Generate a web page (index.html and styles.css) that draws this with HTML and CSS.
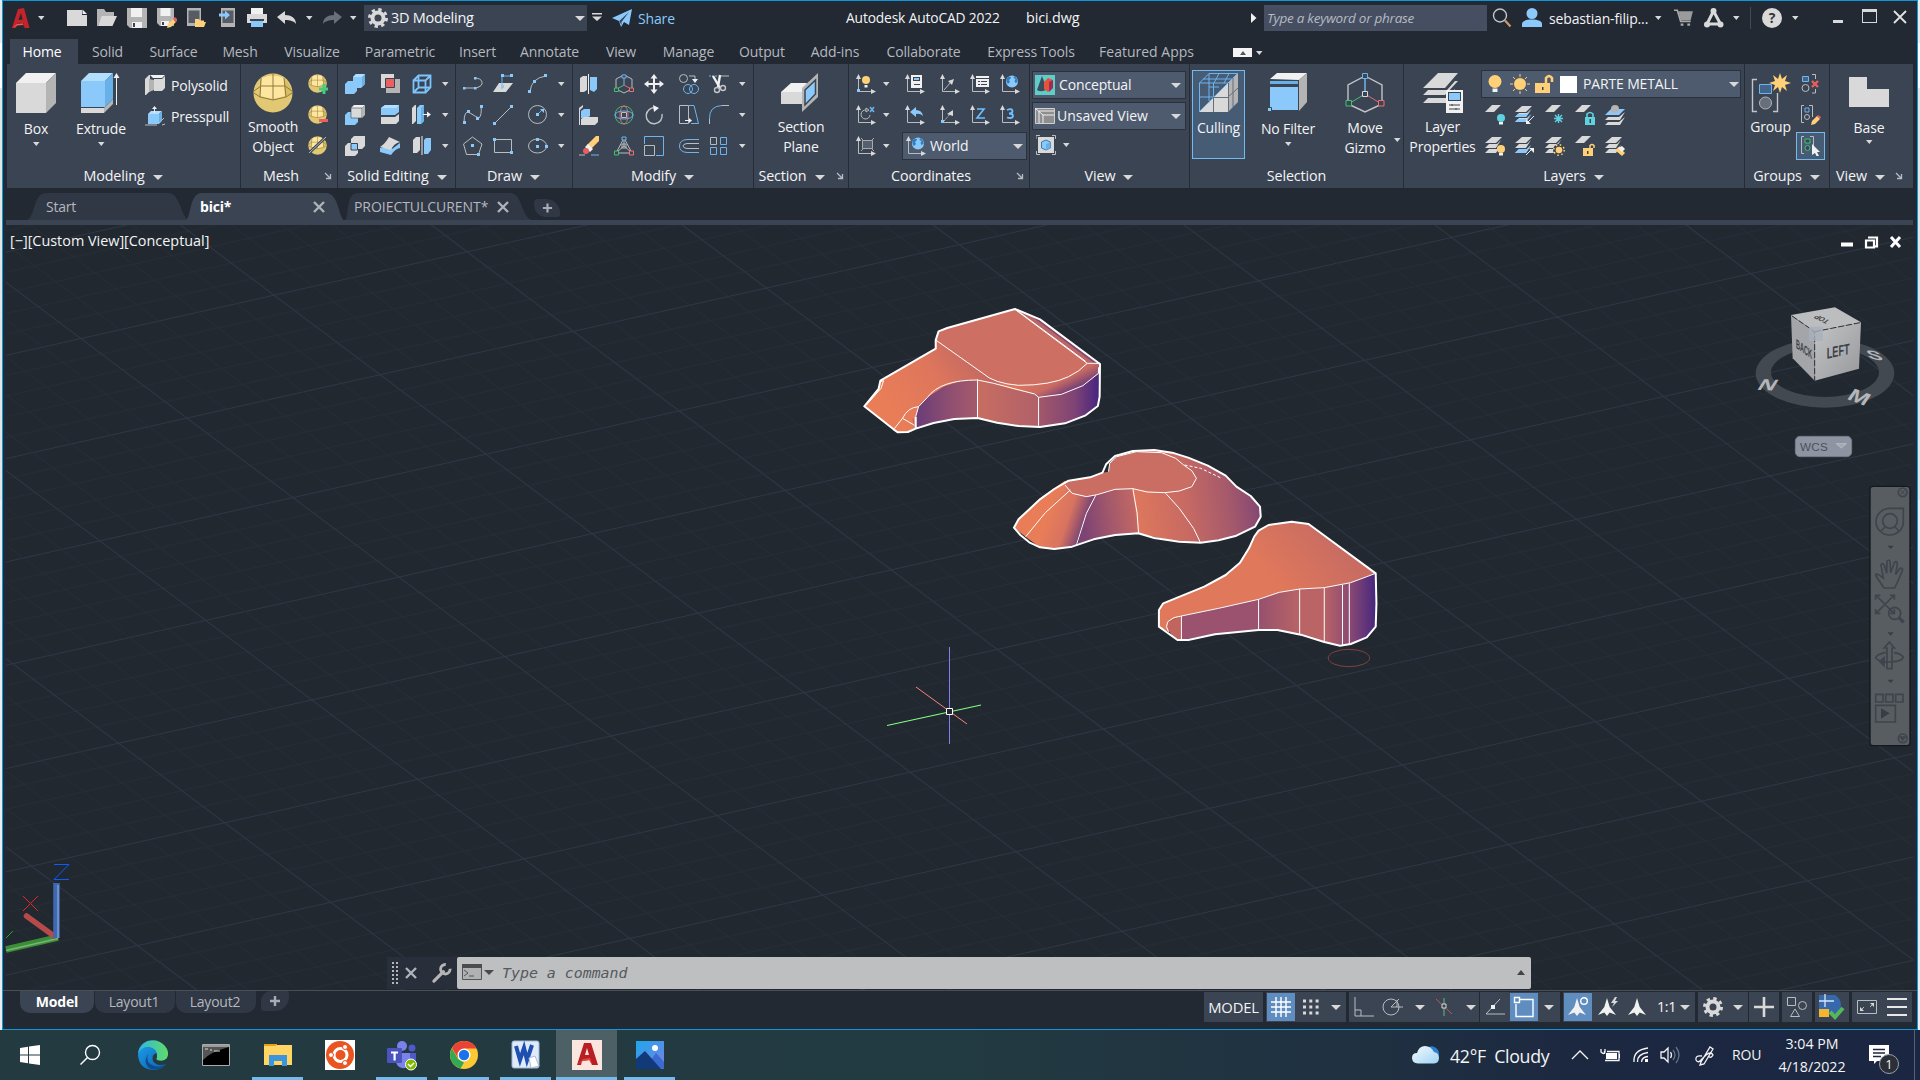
FILE: index.html
```html
<!DOCTYPE html>
<html lang="en">
<head>
<meta charset="utf-8">
<title>Autodesk AutoCAD 2022 - bici.dwg</title>
<link rel="stylesheet" href="styles.css">
</head>
<body>
<svg class="defs" width="0" height="0">
<defs>
<linearGradient id="edgeA" x1="0" y1="0" x2="1" y2="1"><stop offset="0" stop-color="#1a9be6"/><stop offset="1" stop-color="#0d5fb0"/></linearGradient>
<linearGradient id="edgeB" x1="0" y1="0" x2="1" y2="0"><stop offset="0" stop-color="#2fb5ea"/><stop offset="1" stop-color="#5fdc66"/></linearGradient>
<linearGradient id="photoG" x1="0" y1="0" x2="1" y2="1"><stop offset="0" stop-color="#1ea7ee"/><stop offset="1" stop-color="#7a7fe0"/></linearGradient>
<linearGradient id="cloudG" x1="0" y1="0" x2="1" y2="1"><stop offset="0" stop-color="#f4fbff"/><stop offset="1" stop-color="#9fd4f3"/></linearGradient>

<symbol id="dn" viewBox="0 0 12 12"><path class="fg" d="M3 4h6.500l-3.200 4z"/></symbol>
<symbol id="dnL" viewBox="0 0 12 12"><path class="fg" d="M1 4h10l-5 5z"/></symbol>
<symbol id="launch" viewBox="0 0 8 8"><path class="sg" stroke-width="1.300" d="M1 1l5 5M2 6.500h4.500V2"/></symbol>
<symbol id="logo" viewBox="0 0 18 21"><path d="M0 20L6 1l6-1 5.500 20h-5l-1-5-6 .5-1.500 4.500z" fill="#c4232a"/><path d="M6.500 12L9 5l1.700 6.500z" fill="#222933"/><path d="M0 20l5-4 6-.8 1.200 4.800-1-3-6 .5z" fill="#ee5a55"/></symbol>
<symbol id="new" viewBox="0 0 20 20"><path class="fg" d="M0 2h15v5h5v11H0z"/><path class="fw" d="M15.500 1.500L20 6h-4.500z"/></symbol>
<symbol id="open" viewBox="0 0 20 20"><path class="fd" d="M0 1h7l2 3h8v4H5L1 18H0z"/><path class="fg" d="M4.500 8H20l-4.500 10H1z"/></symbol>
<symbol id="save" viewBox="0 0 20 20"><path class="fd" d="M0 0h20v20H3l-3-3z"/><path class="fw" d="M4 0h11v9H4zM5 14h10v6H5z"/><path class="fk" d="M6 15h2v4H6z"/></symbol>
<symbol id="saveas" viewBox="0 0 20 20"><path class="fd" d="M0 0h17v18H3l-3-3z"/><path class="fw" d="M3.500 0h10v8h-10zM4 13h8v5H4z"/><path class="fk" d="M5 14h2v3H5z"/><path class="fy" d="M11 16l5-5 3 3-5 5-4 1z"/><path class="fr" d="M16 11l2-2 3 3-2 2z"/></symbol>
<symbol id="openweb" viewBox="0 0 20 20"><path class="fd" d="M0 0h14v18H0z"/><path fill="#555c66" d="M1.500 2.500h11V15h-11z"/><path class="fy" d="M8 11h4l1 1.500h4V14h2l-2 5H8z"/></symbol>
<symbol id="saveweb" viewBox="0 0 20 20"><path class="fd" d="M4 0h14v19H4z"/><path fill="#555c66" d="M5.500 2.500h11V15h-11z"/><path class="fb" d="M2 5.500h6V2.500l5 4.500-5 4.500v-3H2z"/></symbol>
<symbol id="print" viewBox="0 0 20 20"><path class="fw" d="M4 0h12v6H4z"/><path class="fg" d="M0 6h20v9H0z"/><path class="fk" d="M3 11h14v2H3z"/><path class="fb" d="M4 13h12v6H4z"/></symbol>
<symbol id="undo" viewBox="0 0 20 20"><path class="fg" d="M0 9l8-6v4c6 0 11 3 11 9-2-3-6-4-11-4v4z"/></symbol>
<symbol id="redo" viewBox="0 0 20 20"><path fill="#6a707a" d="M20 9l-8-6v4C6 7 1 10 1 16c2-3 6-4 11-4v4z"/></symbol>
<symbol id="gear" viewBox="0 0 20 20"><circle cx="10" cy="10" r="5.500" fill="none" stroke="#d9d9d9" stroke-width="4"/><circle cx="10" cy="10" r="8.500" fill="none" stroke="#d9d9d9" stroke-width="3" stroke-dasharray="3.340 3.340"/></symbol>
<symbol id="custom" viewBox="0 0 12 12"><path class="fg" d="M0 1h10v1.500H0zM0 4.500h10L5 9z"/></symbol>
<symbol id="plane" viewBox="0 0 20 18"><path class="fb" d="M0 9L20 0l-3 16-5-3-3 5-2-6z"/><path class="fk" d="M7.300 12L17 3 9.500 13v3z"/></symbol>
<symbol id="tri" viewBox="0 0 6 10"><path class="fw" d="M0 0l5.500 5L0 10z"/></symbol>
<symbol id="mag" viewBox="0 0 20 20"><circle cx="8" cy="7.500" r="6.500" class="s2"/><path d="M13 12.500l5.500 6" stroke="#c89a6c" stroke-width="2.200"/></symbol>
<symbol id="user" viewBox="0 0 20 20"><circle cx="10" cy="5.500" r="5.500" class="fb"/><path class="fb" d="M0 19v-3c0-3 4-4.500 10-4.500S20 13 20 16v3z"/></symbol>
<symbol id="cart" viewBox="0 0 18 18"><path d="M0 2h3l3 10h9" fill="none" stroke="#a9a9a9" stroke-width="1.500"/><path d="M4 3h13l-2 8H6z" fill="#9b9b9b"/><path fill="#a9a9a9" d="M6 14h2.500v2H6zM12 14h2.500v2H12z"/></symbol>
<symbol id="app" viewBox="0 0 20 20"><path d="M9.500 3L3 16h13.500z" fill="none" stroke="#d9d9d9" stroke-width="3"/><circle cx="9.500" cy="3" r="3" class="fg"/><circle cx="3" cy="16.500" r="3" class="fg"/><circle cx="16.500" cy="16.500" r="3" class="fg"/></symbol>

<symbol id="box" viewBox="0 0 40 40"><path class="fw" d="M0 10L10 0h30L30 10z"/><path class="fg" d="M0 10h30v30H0z"/><path class="fd" d="M30 10L40 0v30L30 40z"/></symbol>
<symbol id="extrude" viewBox="0 0 40 40"><path class="fg" d="M0 35h23v5H0z"/><path class="fd" d="M23 35l9-9v5l-9 9z"/><path class="fB" d="M0 8l8-8h24l-8 8z"/><path class="fb" d="M0 8h24v26H0z"/><path class="fe" d="M24 8l8-8v26l-8 8z"/><path class="sw" d="M35.500 3v29"/><path class="fw" d="M32.500 5l3-5 3 5z"/></symbol>
<symbol id="polysolid" viewBox="0 0 20 20"><path class="fg" d="M0 4l4-4h1v16l-4 4H0z"/><path class="fw" d="M5 0h15l-3 3H8z"/><path class="fd" d="M4 4l5 1v10l-5 2z"/><path class="fg" d="M9 4h8l3-3v12l-3 3H9z"/></symbol>
<symbol id="presspull" viewBox="0 0 20 20"><path class="fB" d="M3 8l3-3h11l-3 3z"/><path class="fb" d="M3 8h11v10H3z"/><path class="fe" d="M14 8l3-3v10l-3 3z"/><path class="sw" d="M9.500 1v6"/><path class="fw" d="M7 3l2.500-3L12 3z"/><path class="sg" d="M0 19h12M14 17l5-5M17 19l3-1"/></symbol>
<symbol id="ball" viewBox="0 0 40 40"><circle cx="20" cy="20" r="19.500" fill="#e2c873"/><path fill="#ffe6a0" d="M9 5Q20 0 31 5l1 18-12 3-13-3z"/><path fill="#d9bd62" d="M31 6q8 6 8 15l-7 2z"/><path d="M1 18l7-5h24l7 5M7 24l13 3 13-3 6-4M1 20l6 4M8 5l-1 19M20 1v26M31 5l2 19" fill="none" stroke="#8f7a3c"/></symbol>
<symbol id="bPlus" viewBox="0 0 20 20"><use href="#ball" x="0" y="0" width="19" height="19"/><path class="fn" d="M11 13.500h3.500V10h3v3.500H21v3h-3.500V20h-3v-3.500H11z"/></symbol>
<symbol id="bMinus" viewBox="0 0 20 20"><use href="#ball" x="0" y="0" width="19" height="19"/><path class="fr" d="M11 14h9v3h-9z"/></symbol>
<symbol id="bCut" viewBox="0 0 20 20"><use href="#ball" x="0" y="0" width="19" height="19"/><path d="M1 17L18 1" stroke="#3b4453" stroke-width="3"/><path class="sg" d="M1 17L18 1"/></symbol>
<symbol id="union" viewBox="0 0 20 20"><path class="fb" d="M0 10l3-3h5V3l3-3h9v10l-4 4h-4v3l-3 3H0z"/><path class="fB" d="M8 3l3-3h9l-3 3z"/><path class="fe" d="M17 3l3-3v10l-3 3z"/></symbol>
<symbol id="interf" viewBox="0 0 20 20"><path class="fg" d="M1 0h13v14H1z"/><path class="fd" d="M6 5h14v14H6z"/><path class="fr" stroke="#3b4453" d="M5.500 4.500h9v9h-9z"/></symbol>
<symbol id="wire" viewBox="0 0 20 20"><path d="M1.500 6.500h12v12h-12zM1.500 6.500l5-5h12v12l-5 5M13.500 6.500l5-5M6.500 1.500v12h12M6.500 13.500l-5 5" fill="none" stroke="#7cc4fb" stroke-width="1.800"/></symbol>
<symbol id="subtr" viewBox="0 0 20 20"><path class="fb" d="M0 10l3-3h10v10l-3 3H0z"/><path class="fw" d="M6 3l3-3h11l-3 3z"/><path class="fg" stroke="#3b4453" stroke-width=".6" d="M6 3h11v10H6z"/><path class="fd" d="M17 3l3-3v10l-3 3z"/></symbol>
<symbol id="slice" viewBox="0 0 20 20"><path class="fb" d="M1 3l4-3h14v7l-4 3H1z"/><path class="fB" d="M1 3l4-3h14l-3 3z"/><path class="fg" d="M1 12h14l4-3v7l-3 3H1z"/></symbol>
<symbol id="thick" viewBox="0 0 20 20"><path class="fg" d="M0 3l3-3h1v16l-3 3H0z"/><path class="fb" d="M5 3l3-3h4v16l-3 3H5z"/><path class="fe" d="M9 3l3-3v16l-3 3z"/><path class="sw" d="M11 9.500h6"/><path class="fw" d="M15 6.500l4 3-4 3z"/></symbol>
<symbol id="inter" viewBox="0 0 20 20"><path class="fg" d="M6 3l3-3h11v10l-3 3h-4v4l-3 3H0V10l3-3h3z"/><path class="fb" stroke="#3b4453" d="M6 7.500h6.500V14H6z"/></symbol>
<symbol id="fillet3" viewBox="0 0 20 20"><path class="fb" d="M0 12q4 0 6-2l6 3 8-6v5q-5 1-9 7L0 16z"/><path class="fg" d="M0 11Q5 8 9 1l11 5q-6 1-9 8z"/></symbol>
<symbol id="separ" viewBox="0 0 20 20"><path class="fg" d="M1 4l3-3h4v13l-3 3H1z"/><path class="sw" d="M10 0v19"/><path class="fb" d="M12 4l2-2h5v12l-3 4h-4z"/></symbol>
<symbol id="pline" viewBox="0 0 20 20"><path class="sg" d="M1 14h12q7-2 6-6-1-4-8-4"/><path class="fb" d="M0 13h2.500v2.500H0zM11 13h2.500v2.500H11zM11 3h2.500v2.500H11z"/></symbol>
<symbol id="arc" viewBox="0 0 20 20"><path class="sg" d="M2 18Q3 4 18 2"/><path class="fb" d="M0 16h3v3H0zM5 6h3v3H5zM16 0h3v3h-3z"/></symbol>
<symbol id="planar" viewBox="0 0 20 20"><path class="fg" d="M6 9h14l-7 9H0z"/><path class="sb" d="M9 15V2h10"/><path class="fb" d="M8 0h3v3H8zM17 0h3v3h-3zM8 11h3v3H8z"/></symbol>
<symbol id="spline" viewBox="0 0 20 20"><path class="sg" d="M1 18Q1 4 7 8t9 5q3-3 2-12"/><path class="fb" d="M0 16h3v3H0zM4 5h3v3H4zM13 12h3v3h-3zM17 0h3v3h-3z"/></symbol>
<symbol id="line" viewBox="0 0 20 20"><path class="sg" d="M1 19L19 1"/><path class="fb" d="M0 17h3v3H0zM17 0h3v3h-3z"/></symbol>
<symbol id="circle" viewBox="0 0 20 20"><circle class="sg" cx="9.500" cy="9.500" r="9"/><path class="sb" d="M9 10l5-5"/><path class="fb" d="M8 8h3v3H8zM12 4h4v4z"/></symbol>
<symbol id="poly" viewBox="0 0 20 20"><path class="sg" d="M9.500 1L19 8l-3.500 10.500h-12L.5 8z"/><path class="fb" d="M8 8h3v3H8zM14 17h3v3h-3z"/></symbol>
<symbol id="rect" viewBox="0 0 20 20"><path class="sg" d="M1.500 3.500h17v13h-17z"/><path class="fb" d="M0 2h3v3H0zM17 15h3v3h-3z"/></symbol>
<symbol id="ellipse" viewBox="0 0 20 20"><ellipse class="sg" cx="9.500" cy="10" rx="9" ry="7"/><path class="fb" d="M8 2h3v3H8zM8 9h3v3H8zM17 9h3v3h-3z"/></symbol>
<symbol id="mirror3" viewBox="0 0 20 20"><path class="fg" d="M1 4l3-2h4v14l-3 2H1z"/><path class="sw" d="M9.500 0v20"/><path class="fb" d="M11 3h7v12l-3 3-4-2z"/></symbol>
<symbol id="gizmo" viewBox="0 0 20 20"><path class="sg" d="M10 1l8 4v10l-8 4-8-4V5z"/><path class="sb" d="M10 3v8"/><path class="sn" d="M10 11l-7 4"/><path class="sr" d="M10 11l7 4"/><path class="ob" d="M8 1h4v3H8z"/><path class="on" d="M.5 14h4v3.500h-4z"/><path class="or" d="M15.500 14h4v3.500h-4z"/></symbol>
<symbol id="move" viewBox="0 0 20 20"><path d="M10 2v16M2 10h16" stroke="#f0f0f0" stroke-width="2" fill="none"/><path class="fw" d="M6.500 4.500L10 0l3.500 4.500zM6.500 15.500L10 20l3.500-4.500zM4.500 6.500L0 10l4.500 3.500zM15.500 6.500L20 10l-4.500 3.500z"/></symbol>
<symbol id="copy" viewBox="0 0 20 20"><circle class="sg" cx="4.500" cy="4.500" r="4"/><path class="sg" d="M10 2h6v4"/><path class="fw" d="M13 5h6l-3 4z"/><circle class="sb" cx="9" cy="15" r="4.500"/><circle class="sb" cx="15" cy="15" r="4.500"/></symbol>
<symbol id="trim" viewBox="0 0 20 20"><path class="sb" stroke-dasharray="2 1" d="M0 2h9"/><path class="sg" d="M12 2h8"/><path d="M4 2l7 12M11 1L9 13" stroke="#f0f0f0" stroke-width="2.400"/><circle class="s2" cx="8" cy="16" r="2.500"/><circle class="s2" cx="14" cy="14" r="2.500"/></symbol>
<symbol id="align3" viewBox="0 0 20 20"><path class="fg" d="M0 3l4-3v2L1 5v15H0z"/><path class="fb" d="M2 6l3-2h6v7l-3 2H2z"/><path class="fg" d="M2 14l3-2h14v5l-3 3H2z"/></symbol>
<symbol id="rotg" viewBox="0 0 20 20"><circle cx="10" cy="10" r="9" class="sn"/><ellipse cx="10" cy="10" rx="4" ry="9" class="sr"/><ellipse cx="10" cy="10" rx="9" ry="4" class="sb"/><path class="sg" d="M7.500 7.500h5v5h-5z"/></symbol>
<symbol id="rotate" viewBox="0 0 20 20"><path class="s2" d="M12 3A8 8 0 1 0 18 9"/><path class="fw" d="M9 0l6 3-5 4z"/></symbol>
<symbol id="stretch" viewBox="0 0 20 20"><path class="sg" d="M.5.500h9v18h-9z"/><path class="sb" d="M10 .5h5l4.500 18H12"/><path class="sw" d="M6 15.500h6"/><path class="fw" d="M10 13l3 2.500-3 2.500z"/></symbol>
<symbol id="fillet" viewBox="0 0 20 20"><path class="sb" d="M.5 14Q0 1 13 .5"/><path class="sg" d="M.5 14v5M13 .5h7"/></symbol>
<symbol id="erase" viewBox="0 0 20 20"><path class="fy" d="M8 9L17 0h3v5l-9 9z"/><path class="fw" d="M6 11l3-3 5 5-3 3z"/><circle class="fr" cx="7" cy="15" r="3"/><path class="sg" d="M0 19h6"/><path class="sb" d="M12 19h8"/></symbol>
<symbol id="scaleg" viewBox="0 0 20 20"><path class="sg" d="M10 2L2 17h16zM10 10l-7 6M10 10l7 6M10 3v7"/><path class="ob" d="M8 1h4v3H8z"/><path class="on" d="M.5 15h4v4h-4z"/><path class="or" d="M15.500 15h4v4h-4z"/><path class="sg" d="M8 8h4v4H8z"/></symbol>
<symbol id="scale" viewBox="0 0 20 20"><path class="sb" d="M.5 8V.500h19v19H12"/><path class="sg" d="M.5 9.500h10v10H.5z"/></symbol>
<symbol id="offset" viewBox="0 0 20 20"><path class="sb" d="M20 3.500H8Q.5 4 .5 10T8 16.500h12"/><path class="sg" d="M20 7.500H8Q4 8 4 10t4 2.500h12"/></symbol>
<symbol id="array" viewBox="0 0 20 20"><path class="sg" d="M1.500 1.500h6v7h-6z"/><path class="sb" d="M11.500 1.500h6v7h-6zM1.500 11.500h6v7h-6zM11.500 11.500h6v7h-6z"/></symbol>
<symbol id="section" viewBox="0 0 40 40"><path class="fw" d="M0 19l10-9h16l-5 9z"/><path class="fg" d="M0 19h22v12H0z"/><path class="fd" d="M21 15L37 0v24L21 39z"/><path class="fb" stroke="#3b4453" stroke-width="1.500" d="M24 17L34.500 7v14L24 32z"/></symbol>
<symbol id="ax" viewBox="0 0 20 20"><path class="sg" d="M2.500 4v13.500H17"/><path class="fg" d="M0 5l2.500-5L5 5zM15 15l5 2.500L15 20z"/></symbol>
<symbol id="c1" viewBox="0 0 20 20"><use href="#ax" width="20" height="20"/><circle class="fy" cx="10" cy="6" r="4"/><path class="fw" d="M8.500 11h3v2.500h-3z"/><path class="fb" d="M1 15h3v3H1z"/></symbol>
<symbol id="c2" viewBox="0 0 20 20"><use href="#ax" width="20" height="20"/><path class="fw" d="M6 1h11v13H6z"/><path class="fk" d="M8 3h7v4H8z"/><path class="fb" d="M9 4h5v2H9z"/><path class="fk" d="M9 10h6v1H9z"/></symbol>
<symbol id="c3" viewBox="0 0 20 20"><use href="#ax" width="20" height="20"/><path class="sg" d="M4 16l7-8"/><path class="fg" d="M8 7l6-2-2 6z"/></symbol>
<symbol id="c4" viewBox="0 0 20 20"><use href="#ax" width="20" height="20"/><path class="fw" d="M6 2h13v11H6z"/><path class="fk" d="M6 4h13v1H6zM8 7h2v1H8zM11 7h6v1h-6zM8 10h2v1H8zM11 10h6v1h-6z"/></symbol>
<symbol id="c5" viewBox="0 0 20 20"><use href="#ax" width="20" height="20"/><circle class="fb" cx="12" cy="7.500" r="6"/><path fill="#2f7fc0" d="M8 3q3-1 3 1l-2 2 1 2-2 2q-2-2-1.500-5zM14 2q4 2 3.500 6l-2 1-1-2 1-2-2-1z"/></symbol>
<symbol id="c6" viewBox="0 0 20 20"><use href="#ax" width="20" height="20"/><path d="M10 5a4.500 4.500 0 1 0 4 5M10 3v4l3-2z" class="sg"/><path class="sb" stroke-width="1.500" d="M14 2l4 5M18 2l-4 5"/></symbol>
<symbol id="c7" viewBox="0 0 20 20"><use href="#ax" width="20" height="20"/><path class="fb" d="M5 7l6-5v3q6 0 7 6-3-3-7-2v3z"/></symbol>
<symbol id="c8" viewBox="0 0 20 20"><use href="#ax" width="20" height="20"/><path class="sg" stroke-dasharray="2 1" d="M4 16l7-8"/><path class="fg" d="M7 9l6-4v6z"/><path class="fb" d="M1 15h3v3H1z"/></symbol>
<symbol id="c9" viewBox="0 0 20 20"><use href="#ax" width="20" height="20"/><path d="M7 4h7L7 13h8" fill="none" stroke="#6fbfff" stroke-width="1.600"/></symbol>
<symbol id="c10" viewBox="0 0 20 20"><use href="#ax" width="20" height="20"/><path d="M7 5q5-2 5.500 1 0 2.500-3.500 2.500 4 0 4 2.500-.5 3-6 1.500" fill="none" stroke="#6fbfff" stroke-width="1.800"/></symbol>
<symbol id="c11" viewBox="0 0 20 20"><use href="#ax" width="20" height="20"/><path d="M6.500 4.500h10v8h-10zM5 2l3 3M18 2l-3 3M5 15l3-3M18 15l-3-3" fill="#555f6d" stroke="#aaa"/></symbol>
<symbol id="vs" viewBox="0 0 20 20"><path fill="#5fcdc8" d="M0 0h20v20H0z"/><path fill="#3d4c5c" d="M7 1l5 13q-5 4-10 1z"/><path fill="#e5533d" d="M9 7l4-4 5 2v8l-5 4-4-3z"/><path fill="#a02c50" d="M14 7l4-2v8l-4 4z"/></symbol>
<symbol id="uv" viewBox="0 0 20 20"><path fill="#8e8e8e" stroke="#d0d0d0" d="M.5 2.500h19v15H.5z"/><path class="sw" d="M4 17V5h15M8 17V9h11M0 2l8 7"/></symbol>
<symbol id="vb" viewBox="0 0 20 20"><path class="sg" d="M0 4V.5h4M16 .5h3.500V4M19.500 16v3.500H16M4 19.500H.5V16"/><path class="fg" d="M2 2h16v16H2z"/><path class="fb" stroke="#3f79b0" d="M5.500 7l4.500-2 4.500 2v6L10 15l-4.500-2z"/><path class="fe" d="M10 9l4.500-2v6L10 15z"/></symbol>
<symbol id="culling" viewBox="0 0 40 40"><path class="fg" d="M0 39L29 10v29z"/><path class="fd" d="M29 10L39 0v29l-10 10z"/><path class="sb" d="M.5 10L10 .5h29M.5 10v28M.5 10H29M10 .5V28M.5 24h14M14.500 10v14M20 .5L15 10M30 .5L25 10M4 6h29M10 14h10M0 39l10-10h1M39 0L0 39"/><path d="M14.500 24v15M14 24.500h15M29.500 10v29M34 5v29M29 24l10-9" fill="none" stroke="#646f7c"/></symbol>
<symbol id="nofilter" viewBox="0 0 40 40"><path class="fw" d="M2 6l7-6h30l-8 7z"/><path class="fd" d="M31 7l8-7v29l-8 9z"/><path class="fe" d="M2 8h28v3H2z"/><path class="fb" d="M2 14h28v23H2z"/><path class="fb" stroke="#3b4453" d="M-.5 34.500h4v4h-4z"/></symbol>
<symbol id="gizmoL" viewBox="0 0 40 40"><path class="s2" d="M20 3l17 9v19l-17 8-17-8V12z"/><path class="sb" stroke-width="1.500" d="M20 5v15"/><path class="sn" d="M20 21L5 30"/><path class="sr" d="M20 21l15 9"/><path class="ob" d="M17.500.500h5v5h-5z"/><path class="on" d="M1 27.500h5.500V33H1z"/><path class="or" d="M33.500 27.500H39V33h-5.500z"/><path fill="#3b4453" stroke="#d9d9d9" d="M17.500 18.500h5v5h-5z"/></symbol>
<symbol id="layerL" viewBox="0 0 40 40"><path class="fg" d="M0 15L15 0h20L22 15zM0 22l5-5h19l8-9h3L22 22zM0 30l5-5h19l8-9v6l-9 8z"/><path class="fw" d="M23 17h17v23H23z"/><path class="fk" d="M25 19h13v9H25z"/><path class="fb" d="M26 20h11v7H26z"/><path class="sk" d="M26 32h11M26 36h11M29 31v2M33 35v2"/></symbol>
<symbol id="sheet" viewBox="0 0 20 20"><path class="fg" d="M0 7l7-7h9l-7 7z"/></symbol>
<symbol id="stack" viewBox="0 0 20 20"><path class="fg" d="M0 7l7-6h10l-6 6zM0 12l4-4h8l4-4-5 8zM0 17l4-4h8l4-4-5 8z"/></symbol>
<symbol id="l1" viewBox="0 0 20 20"><use href="#sheet" width="20" height="20"/><circle cx="16" cy="13" r="4" fill="#5fd2df"/><path class="fw" d="M14 17h4v2.500h-4z"/></symbol>
<symbol id="l2" viewBox="0 0 20 20"><use href="#stack" width="20" height="20"/><path class="fb" d="M0 12l3-3h9l5-5-6 8zM0 17l3-3h9l5-5-6 8z"/><path class="sw" d="M19 11l-6 6"/><path class="fw" d="M11 14v5h5z"/></symbol>
<symbol id="l3" viewBox="0 0 20 20"><use href="#sheet" width="20" height="20"/><path d="M13.500 9v9M9 13.500h9M10 10l7 7M17 10l-7 7" stroke="#5fd2df" stroke-width="1.400"/></symbol>
<symbol id="l4" viewBox="0 0 20 20"><use href="#sheet" width="20" height="20"/><path d="M10 12h10v8H10z" fill="#5fd2df"/><path d="M12 12V9q3-3 6 0v3" fill="none" stroke="#5fd2df" stroke-width="1.600"/><path class="fk" d="M14.500 14H16v4h-1.500z"/></symbol>
<symbol id="l5" viewBox="0 0 20 20"><path class="fg" d="M0 15l3-3h11l6-5-5 8zM0 20l3-3h11l6-5-5 8z"/><path class="fb" d="M0 10l6-6h14l-6 6z"/><circle class="fd" cx="10" cy="4" r="4"/></symbol>
<symbol id="l6" viewBox="0 0 20 20"><use href="#stack" width="20" height="20"/><circle class="fy" cx="16" cy="13" r="4"/><path class="fw" d="M14 17h4v2.500h-4z"/></symbol>
<symbol id="l7" viewBox="0 0 20 20"><use href="#stack" width="20" height="20"/><path class="fb" d="M0 17l4-4h8l4-4-5 8z"/><path class="sw" d="M11 19l6-6"/><path class="fw" d="M14 12h5v5z"/></symbol>
<symbol id="l8" viewBox="0 0 20 20"><use href="#stack" width="20" height="20"/><circle class="fk" cx="14" cy="14" r="6"/><circle class="fy" cx="14" cy="14" r="3.300"/><circle cx="14" cy="14" r="5.200" fill="none" stroke="#ffd077" stroke-width="1.500" stroke-dasharray="1.500 2.600"/></symbol>
<symbol id="l9" viewBox="0 0 20 20"><use href="#sheet" width="20" height="20"/><path class="fy" d="M8 12h10v8H8z"/><path d="M15 12V9.500q2-2 4 0V12" fill="none" stroke="#ffd077" stroke-width="1.500"/><path class="fk" d="M12 15h1.500v3H12z"/></symbol>
<symbol id="l10" viewBox="0 0 20 20"><use href="#stack" width="20" height="20"/><path class="fy" d="M10 14l4-3 6 6-3 3z"/><path class="fw" d="M13 12l4-2 3 3-3 3z"/></symbol>
<symbol id="bulb" viewBox="0 0 20 20"><circle class="fy" cx="10" cy="7.500" r="6.500"/><path class="fw" d="M7.500 14.500h5V18h-5z"/></symbol>
<symbol id="sun" viewBox="0 0 20 20"><circle class="fy" cx="10" cy="10" r="6"/><path stroke="#ffd077" d="M10 0v3M10 17v3M0 10h3M17 10h3M3 3l2 2M15 15l2 2M3 17l2-2M15 5l2-2"/></symbol>
<symbol id="unlock" viewBox="0 0 20 20"><path class="fy" d="M0 9h15v10H0z"/><path d="M11 9V4q3-4 6 0v4" fill="none" stroke="#ffd077" stroke-width="2.500"/><path class="fk" d="M7 13h1.500v3H7z"/></symbol>
<symbol id="groupL" viewBox="0 0 40 40"><path class="s2" d="M6 6.500H1.500v32H6M22 38.500h4.500V20"/><path d="M8.500 11.500h12v9h-12z" fill="#43658a" stroke="#6fb4ee"/><circle cx="14.500" cy="30" r="6" fill="#666f7b" stroke="#b5b5b5"/><path class="fy" d="M29 0l2 6 5-4-2 6 6 2-6 2 2 6-5-4-2 6-2-6-5 4 2-6-6-2 6-2-2-6 5 4z"/></symbol>
<symbol id="ungroup" viewBox="0 0 20 20"><path d="M1.500 2.500h6v5h-6z" fill="#43658a" stroke="#6fb4ee"/><circle class="sg" cx="4.500" cy="14" r="3.500"/><path class="sg" d="M11 .5h3.500V5M14.500 15v4H11"/><path d="M11 7l6 6M17 7l-6 6" stroke="#e8605c" stroke-width="2.400"/></symbol>
<symbol id="gedit" viewBox="0 0 20 20"><path class="sg" d="M3 .5H.5v17H3M8 .5h3.500V12"/><path class="ob" d="M4 3h4v4H4z"/><circle class="sg" cx="6" cy="12" r="2.500"/><path class="fy" d="M11 16l5-5 3 3-5 5-4 1z"/><path class="fr" d="M16 11l1-1 3 2-1 2z"/></symbol>
<symbol id="gsel" viewBox="0 0 20 20"><path class="sg" d="M3 .5H.5v17H3M9 .5h3.500V10"/><path class="on" d="M4 3h5v4H4z"/><circle class="on" cx="6.500" cy="12" r="2.500"/><path class="fw" d="M11 8v11l3-2 2 4 2-1-2-4h3z"/></symbol>
<symbol id="base" viewBox="0 0 40 30"><path class="fg" d="M0 0h18v12h22v18H0z"/></symbol>
<symbol id="x" viewBox="0 0 12 12"><path d="M1 1l10 10M11 1L1 11" stroke="#aeb3ba" stroke-width="2.400"/></symbol>
<symbol id="plus" viewBox="0 0 12 12"><path d="M6 1v10M1 6h10" stroke="#a8adb5" stroke-width="2.400"/></symbol>
<symbol id="compass" viewBox="0 0 20 20"><path class="fw" d="M10 0l3 10 7 9-7-3-3 4-3-4-7 3L7 10z"/></symbol>
</defs>
</svg>

<div class="window">
<header class="title">
  <svg class="logo"><use href="#logo"/></svg><svg class="a"><use href="#dn"/></svg>
  <svg class="i"><use href="#new"/></svg><svg class="i"><use href="#open"/></svg><svg class="i"><use href="#save"/></svg><svg class="i"><use href="#saveas"/></svg><svg class="i"><use href="#openweb"/></svg><svg class="i"><use href="#saveweb"/></svg><svg class="i"><use href="#print"/></svg><svg class="i"><use href="#undo"/></svg><svg class="a"><use href="#dn"/></svg><svg class="i"><use href="#redo"/></svg><svg class="a"><use href="#dn"/></svg>
  <div class="wsp"><svg class="i"><use href="#gear"/></svg><span>3D Modeling</span><svg class="a"><use href="#dnL"/></svg></div>
  <svg class="a"><use href="#custom"/></svg>
  <svg class="i"><use href="#plane"/></svg><span class="share">Share</span>
  <span class="name">Autodesk AutoCAD 2022</span><span class="name doc">bici.dwg</span>
  <svg class="tri"><use href="#tri"/></svg><div class="search">Type a keyword or phrase</div>
  <svg class="i"><use href="#mag"/></svg><svg class="i"><use href="#user"/></svg><span class="usr">sebastian-filip...</span><svg class="a"><use href="#dn"/></svg>
  <svg class="i cart"><use href="#cart"/></svg><svg class="i"><use href="#app"/></svg><svg class="a"><use href="#dn"/></svg><i class="vsep"></i>
  <span class="help">?</span><svg class="a"><use href="#dn"/></svg>
  <i class="min"></i><i class="max"></i><svg class="close" viewBox="0 0 14 14"><path d="M1 1l12 12M13 1L1 13"/></svg>
</header>

<nav class="tabs"><b>Home</b><span>Solid</span><span>Surface</span><span>Mesh</span><span>Visualize</span><span>Parametric</span><span>Insert</span><span>Annotate</span><span>View</span><span>Manage</span><span>Output</span><span>Add-ins</span><span>Collaborate</span><span>Express Tools</span><span>Featured Apps</span><i class="rbtn"></i><svg class="a"><use href="#dn"/></svg></nav>

<section class="ribbon">
  <div class="panel p-model"><div class="body">
    <div class="big"><svg class="b"><use href="#box"/></svg><span>Box</span><svg class="a"><use href="#dn"/></svg></div>
    <div class="big"><svg class="b"><use href="#extrude"/></svg><span>Extrude</span><svg class="a"><use href="#dn"/></svg></div>
    <div class="rows"><div><svg class="i"><use href="#polysolid"/></svg>Polysolid</div><div><svg class="i"><use href="#presspull"/></svg>Presspull</div></div>
  </div><footer>Modeling<svg class="a"><use href="#dnL"/></svg></footer></div>

  <div class="panel p-mesh"><div class="body">
    <div class="big two"><svg class="b"><use href="#ball"/></svg><span>Smooth<br>Object</span></div>
    <div class="grid"><svg class="i"><use href="#bPlus"/></svg><svg class="i"><use href="#bMinus"/></svg><svg class="i"><use href="#bCut"/></svg></div>
  </div><footer>Mesh<svg class="l"><use href="#launch"/></svg></footer></div>

  <div class="panel p-solid"><div class="body"><div class="grid">
    <svg class="i"><use href="#union"/></svg><svg class="i"><use href="#interf"/></svg><svg class="i"><use href="#wire"/></svg><svg class="a"><use href="#dn"/></svg>
    <svg class="i"><use href="#subtr"/></svg><svg class="i"><use href="#slice"/></svg><svg class="i"><use href="#thick"/></svg><svg class="a"><use href="#dn"/></svg>
    <svg class="i"><use href="#inter"/></svg><svg class="i"><use href="#fillet3"/></svg><svg class="i"><use href="#separ"/></svg><svg class="a"><use href="#dn"/></svg>
  </div></div><footer>Solid Editing<svg class="a"><use href="#dnL"/></svg></footer></div>

  <div class="panel p-draw"><div class="body"><div class="grid">
    <svg class="i"><use href="#pline"/></svg><svg class="i"><use href="#planar"/></svg><svg class="i"><use href="#arc"/></svg><svg class="a"><use href="#dn"/></svg>
    <svg class="i"><use href="#spline"/></svg><svg class="i"><use href="#line"/></svg><svg class="i"><use href="#circle"/></svg><svg class="a"><use href="#dn"/></svg>
    <svg class="i"><use href="#poly"/></svg><svg class="i"><use href="#rect"/></svg><svg class="i"><use href="#ellipse"/></svg><svg class="a"><use href="#dn"/></svg>
  </div></div><footer>Draw<svg class="a"><use href="#dnL"/></svg></footer></div>

  <div class="panel p-modify"><div class="body"><div class="grid">
    <svg class="i"><use href="#mirror3"/></svg><svg class="i"><use href="#gizmo"/></svg><svg class="i"><use href="#move"/></svg><svg class="i"><use href="#copy"/></svg><svg class="i"><use href="#trim"/></svg><svg class="a"><use href="#dn"/></svg>
    <svg class="i"><use href="#align3"/></svg><svg class="i"><use href="#rotg"/></svg><svg class="i"><use href="#rotate"/></svg><svg class="i"><use href="#stretch"/></svg><svg class="i"><use href="#fillet"/></svg><svg class="a"><use href="#dn"/></svg>
    <svg class="i"><use href="#erase"/></svg><svg class="i"><use href="#scaleg"/></svg><svg class="i"><use href="#scale"/></svg><svg class="i"><use href="#offset"/></svg><svg class="i"><use href="#array"/></svg><svg class="a"><use href="#dn"/></svg>
  </div></div><footer>Modify<svg class="a"><use href="#dnL"/></svg></footer></div>

  <div class="panel p-section"><div class="body"><div class="big two"><svg class="b"><use href="#section"/></svg><span>Section<br>Plane</span></div></div>
  <footer>Section<svg class="a"><use href="#dnL"/></svg><svg class="l"><use href="#launch"/></svg></footer></div>

  <div class="panel p-coord"><div class="body"><div class="grid">
    <svg class="i"><use href="#c1"/></svg><svg class="a"><use href="#dn"/></svg><svg class="i"><use href="#c2"/></svg><svg class="i"><use href="#c3"/></svg><svg class="i"><use href="#c4"/></svg><svg class="i"><use href="#c5"/></svg>
    <svg class="i"><use href="#c6"/></svg><svg class="a"><use href="#dn"/></svg><svg class="i"><use href="#c7"/></svg><svg class="i"><use href="#c8"/></svg><svg class="i"><use href="#c9"/></svg><svg class="i"><use href="#c10"/></svg>
    <svg class="i"><use href="#c11"/></svg><svg class="a"><use href="#dn"/></svg><div class="sel world"><svg class="i"><use href="#c5"/></svg><span>World</span><svg class="a"><use href="#dnL"/></svg></div>
  </div></div><footer>Coordinates<svg class="l"><use href="#launch"/></svg></footer></div>

  <div class="panel p-view"><div class="body col">
    <div class="sel"><svg class="i"><use href="#vs"/></svg><span>Conceptual</span><svg class="a"><use href="#dnL"/></svg></div>
    <div class="sel uv"><svg class="i"><use href="#uv"/></svg><span>Unsaved View</span><svg class="a"><use href="#dnL"/></svg></div>
    <div class="vbrow"><svg class="i"><use href="#vb"/></svg><svg class="a"><use href="#dn"/></svg></div>
  </div><footer>View<svg class="a"><use href="#dnL"/></svg></footer></div>

  <div class="panel p-selection"><div class="body">
    <div class="big cull"><svg class="b"><use href="#culling"/></svg><span>Culling</span></div>
    <div class="big"><svg class="b"><use href="#nofilter"/></svg><span>No Filter</span><svg class="a"><use href="#dn"/></svg></div>
    <div class="big two mg"><svg class="b"><use href="#gizmoL"/></svg><span>Move<br>Gizmo</span></div><svg class="a mga"><use href="#dn"/></svg>
  </div><footer>Selection</footer></div>

  <div class="panel p-layers"><div class="body">
    <div class="big two"><svg class="b"><use href="#layerL"/></svg><span>Layer<br>Properties</span></div>
    <div class="lay"><div class="sel"><svg class="i"><use href="#bulb"/></svg><svg class="i"><use href="#sun"/></svg><svg class="i"><use href="#unlock"/></svg><i class="sw1"></i><span>PARTE METALL</span><svg class="a"><use href="#dnL"/></svg></div>
    <div class="grid"><svg class="i"><use href="#l1"/></svg><svg class="i"><use href="#l2"/></svg><svg class="i"><use href="#l3"/></svg><svg class="i"><use href="#l4"/></svg><svg class="i"><use href="#l5"/></svg><svg class="i"><use href="#l6"/></svg><svg class="i"><use href="#l7"/></svg><svg class="i"><use href="#l8"/></svg><svg class="i"><use href="#l9"/></svg><svg class="i"><use href="#l10"/></svg></div></div>
  </div><footer>Layers<svg class="a"><use href="#dnL"/></svg></footer></div>

  <div class="panel p-groups"><div class="body">
    <div class="big two"><svg class="b"><use href="#groupL"/></svg><span>Group</span></div>
    <div class="gcol"><svg class="i"><use href="#ungroup"/></svg><svg class="i"><use href="#gedit"/></svg><div class="gact"><svg class="i"><use href="#gsel"/></svg></div></div>
  </div><footer>Groups<svg class="a"><use href="#dnL"/></svg></footer></div>

  <div class="panel p-base"><div class="body"><div class="big"><svg class="b"><use href="#base"/></svg><span>Base</span><svg class="a"><use href="#dn"/></svg></div></div>
  <footer>View<svg class="a"><use href="#dnL"/></svg><svg class="l"><use href="#launch"/></svg></footer></div>
</section>

<div class="files">
  <div class="ft f1"><span>Start</span></div><div class="ft f2"><span>bici*</span><svg class="x"><use href="#x"/></svg></div><div class="ft f3"><span>PROIECTULCURENT*</span><svg class="x"><use href="#x"/></svg></div><div class="ft f4"><svg class="x"><use href="#plus"/></svg></div>
</div>

<main class="canvas">
<svg class="scene" viewBox="6 225 1907 765" width="1907" height="765">
  <defs>
    <pattern id="ga" patternUnits="userSpaceOnUse" x="0" y="46.300" width="2400" height="103.300" patternTransform="skewY(-12.650)"><path d="M0 20.660h2400M0 41.300h2400M0 62h2400M0 82.600h2400" stroke="#262d37"/><path d="M0 .5h2400" stroke="#2f3746"/></pattern>
    <pattern id="gb" patternUnits="userSpaceOnUse" x="0" y="89" width="2400" height="188.200" patternTransform="skewY(36.870)"><path d="M0 37.600h2400M0 75.300h2400M0 113h2400M0 150.600h2400" stroke="#262d37"/><path d="M0 .6h2400" stroke="#2f3746" stroke-width="1.200"/></pattern>
    <linearGradient id="b1" gradientUnits="userSpaceOnUse" x1="140" y1="350" x2="400" y2="180"><stop offset="0" stop-color="#e87d58"/><stop offset=".5" stop-color="#de765c"/><stop offset="1" stop-color="#bd6662"/></linearGradient>
    <linearGradient id="b2" gradientUnits="userSpaceOnUse" x1="212" y1="0" x2="385" y2="0"><stop offset="0" stop-color="#693c78"/><stop offset=".6" stop-color="#925070"/><stop offset="1" stop-color="#a45a6b"/></linearGradient>
    <linearGradient id="b3" gradientUnits="userSpaceOnUse" x1="385" y1="0" x2="556" y2="0"><stop offset="0" stop-color="#c86e62"/><stop offset="1" stop-color="#b06068"/></linearGradient>
    <linearGradient id="b4" gradientUnits="userSpaceOnUse" x1="556" y1="0" x2="727" y2="0"><stop offset="0" stop-color="#a3586a"/><stop offset=".6" stop-color="#7e4376"/><stop offset="1" stop-color="#45247f"/></linearGradient>
    <linearGradient id="b5" gradientUnits="userSpaceOnUse" x1="610" y1="230" x2="650" y2="305"><stop offset="0" stop-color="#dc755d"/><stop offset=".5" stop-color="#c86b62"/><stop offset="1" stop-color="#6d3b7a"/></linearGradient>
    <linearGradient id="m1" gradientUnits="userSpaceOnUse" x1="580" y1="680" x2="690" y2="715"><stop offset="0" stop-color="#e87d58"/><stop offset=".5" stop-color="#d77360"/><stop offset="1" stop-color="#6a3b78"/></linearGradient>
    <linearGradient id="m2" gradientUnits="userSpaceOnUse" x1="680" y1="690" x2="835" y2="670"><stop offset="0" stop-color="#7d4374"/><stop offset=".5" stop-color="#a3586b"/><stop offset="1" stop-color="#c56964"/></linearGradient>
    <linearGradient id="m3" gradientUnits="userSpaceOnUse" x1="830" y1="680" x2="1180" y2="640"><stop offset="0" stop-color="#de775c"/><stop offset=".4" stop-color="#c76a63"/><stop offset=".75" stop-color="#a4596b"/><stop offset="1" stop-color="#824673"/></linearGradient>
    <linearGradient id="r1" gradientUnits="userSpaceOnUse" x1="1180" y1="830" x2="1340" y2="700"><stop offset="0" stop-color="#e0785b"/><stop offset="1" stop-color="#c86c62"/></linearGradient>
    <linearGradient id="r2" gradientUnits="userSpaceOnUse" x1="1172" y1="0" x2="1287" y2="0"><stop offset="0" stop-color="#96506e"/><stop offset="1" stop-color="#b96466"/></linearGradient>
    <linearGradient id="r3" gradientUnits="userSpaceOnUse" x1="1356" y1="0" x2="1502" y2="0"><stop offset="0" stop-color="#b86366"/><stop offset=".45" stop-color="#8f4c72"/><stop offset="1" stop-color="#46267f"/></linearGradient>
    <linearGradient id="cubeR" x1="0" y1="0" x2="1" y2="1"><stop offset="0" stop-color="#c3c4c6"/><stop offset="1" stop-color="#96989b"/></linearGradient>
  </defs>
  <rect x="6" y="225" width="1907" height="765" fill="url(#ga)"/><rect x="6" y="225" width="1907" height="765" fill="url(#gb)"/>
  <g class="solids" transform="translate(840 290) scale(.35714 .33333)">
    <path fill="url(#b1)" d="M490 57L560 88 728 222 727 320 722 348 688 376 630 400 560 411 500 408 440 398 385 384 320 387 262 399 212 416 190 426 162 427 150 418 68 349 108 297 113 272 268 176 268 150 276 124 300 114z"/>
    <path fill="url(#b2)" d="M385 270L340 272 290 290 245 322 220 350 212 380 212 416 262 399 320 387 385 384z"/>
    <path fill="url(#b3)" d="M385 270L460 294 545 312 556 322V411L500 408 440 398 385 384z"/>
    <path fill="url(#b5)" d="M440 280L520 286 600 275 650 255 690 220 728 222 720 250 685 285 620 313 556 322 545 312 480 298z"/>
    <path fill="url(#b4)" d="M556 322L620 313 680 287 724 250 727 320 722 348 688 376 630 400 556 411z"/>
    <path fill="#86486f" d="M490 57L560 88 728 222H692z"/><path fill="#bb6666" d="M494 62L540 82 714 221H692z"/>
    <path fill="#cd6f62" d="M490 57L300 114 276 124 268 150 400 250Q430 280 500 286 590 286 640 260 670 245 692 220z"/>
    <path class="ln" d="M492 60L692 220H728M498 63L688 214M268 150L400 250Q430 280 500 286 590 286 640 260 670 245 692 220M385 268V384M556 322V411M385 270L430 280 545 312 556 322 620 313 680 287 724 250V232M385 270Q280 270 245 322L220 350 212 380M220 350Q190 352 175 385L152 416M175 385L212 408M113 275L122 272 115 295 74 345"/>
    <path fill="none" stroke="#62367a" d="M204 385l6 28"/>
    <path class="out" d="M490 57L560 88 728 222 727 320 722 348 688 376 630 400 560 411 500 408 440 398 385 384 320 387 262 399 212 416 190 426 162 427 150 418 68 349 108 297 113 272 268 176 268 150 276 124 300 114zM212 380V416"/>

    <path fill="url(#m3)" d="M855 480L920 485 975 503 1030 527 1080 557 1110 590 1150 618 1176 650 1178 680 1162 710 1110 737 1010 758 920 750 835 730 770 590 775 520z"/>
    <path fill="url(#m1)" d="M630 572L560 625 500 690 487 713 525 745 560 772 600 777 660 766 690 670 720 612 640 575z"/>
    <path fill="url(#m2)" d="M716 616L690 670 665 765 730 743 835 730 820 596 770 598z"/>
    <path fill="#ca6d63" d="M735 548L700 562 640 572 630 585 650 610 690 620 720 615 760 600 820 596 910 608 970 595 998 570 985 542 962 525 930 497 880 485 830 485 775 500 755 520 752 545z"/>
    <path class="ln" d="M752 545L755 520 775 500 830 485 900 488 940 505 962 525 985 542 998 565 985 590 950 603 910 608 860 606 820 596 770 598 720 614 690 620 650 610 630 585M645 600L575 668 520 740M716 616L690 670 662 765M820 596L832 670 836 730M912 610L950 655 990 715 1009 757"/>
    <path class="ln" stroke-dasharray="3 2" d="M965 525L1010 535 1065 563"/>
    <path class="out" d="M735 548L745 523 770 498 820 483 880 480 930 488 975 503 1030 527 1080 557 1110 590 1150 618 1176 650 1178 680 1162 710 1110 737 1060 751 1010 758 950 755 880 744 835 730 770 735 710 748 650 770 600 777 560 772 530 757 505 735 487 713 500 688 560 628 600 597 640 572 700 562z"/>

    <path fill="url(#r1)" d="M1172 722L1200 705 1265 695 1312 702 1500 850 1430 878 1356 893 1287 897 1230 907 1172 928 1060 955 956 978 918 995 920 1025 893 1010 893 960 905 940 1020 890 1090 850 1125 810 1145 775z"/>
    <path fill="#9b526f" d="M956 978L1060 955 1172 928V1020L1050 1033 956 1050z"/><path fill="#c0665f" d="M918 995L956 978V1050L935 1043 917 1018z"/>
    <path fill="url(#r2)" d="M1172 928L1230 907 1287 897V1032L1225 1022 1172 1020z"/><path fill="#bb6466" d="M1287 897L1356 893V1056L1287 1032z"/>
    <path fill="url(#r3)" d="M1356 893L1430 878 1500 850 1502 1005 1475 1042 1425 1062 1395 1065 1356 1056z"/>
    <path class="ln" d="M1500 850L1430 878 1356 893 1287 897 1230 907 1172 928 1060 955 956 978 935 983 918 995 914 1010 920 1025M956 978V1050M1172 928V1020M1287 897V1032M1356 893V1056M1407 885V1065M1426 880V1062"/>
    <path class="out" d="M1172 722L1200 705 1265 695 1312 702 1500 850 1502 940 1500 1010 1475 1042 1430 1062 1400 1067 1356 1056 1290 1034 1225 1020 1172 1020 1050 1033 975 1050 945 1050 893 1010 893 960 905 940 1020 890 1080 855 1120 818 1145 775 1160 740z"/>
    <ellipse cx="1425" cy="1104" rx="58" ry="26" fill="none" stroke="#844043"/>
  </g>
  <path d="M949.500 647v97" stroke="#827fe8"/><path d="M916 687l51 37" stroke="#ff8080"/><path d="M887 725.500l94-20.500" stroke="#80ff80" stroke-width="1.200"/><path d="M946.500 708.500h6v6h-6z" fill="#212830" stroke="#fff"/>
  <path d="M6 949.500l52-12" stroke="#3b8d38" stroke-width="6.500"/><path d="M6 950.500l52-12" stroke="#76b573" stroke-width="1.600"/>
  <path d="M26.500 916L54 936" stroke="#b44b48" stroke-width="5.500" stroke-linecap="round"/><path d="M56.500 883v55" stroke="#4068b0" stroke-width="6.500"/><path d="M58 885v53" stroke="#6d8fc8" stroke-width="2"/>
  <path d="M54 864.500h15L54 879.500h15" fill="none" stroke="#0a5cff"/><path d="M23 896l15 15M38 896l-15 15" stroke="#e52525"/><path d="M6 938l7-7" stroke="#1ca81c"/>
  <g transform="translate(1720 290) scale(.33333)">
    <path fill="#424951" fill-rule="evenodd" d="M107 250a208 103 0 1 0 416 0a208 103 0 1 0-416 0zM153 247a162 74 0 1 0 324 0a162 74 0 1 0-324 0z"/>
    <path fill="#bcbdbf" d="M213 75L345 52 423 97 284 125z"/><path fill="#a3a5a8" d="M213 75L284 125V272L218 205z"/><path fill="url(#cubeR)" d="M284 125L423 97 417 236 284 272z"/>
    <path d="M216 78L284 125V272M284 125L420 98" fill="none" stroke="#2c3138" stroke-width="3" stroke-dasharray="18 6"/><path fill="#a9b0bc" opacity=".8" d="M267 110h41v43h-41z"/>
    <g class="cubetx"><text transform="matrix(.6 -.12 0 1 320 206)">LEFT</text><text transform="matrix(.36 .26 0 .85 228 173)">BACK</text><text transform="matrix(-.4 -.2 .4 -.3 330 92)">TOP</text></g>
    <g class="cubedir"><text transform="matrix(1.250 .05 -.5 .8 108 299)">N</text><text transform="matrix(1.200 .25 .3 .65 446 204)">S</text><text transform="matrix(1.200 .45 -.55 .8 378 326)">M</text></g>
    <rect x="226" y="439" width="169" height="61" rx="14" fill="#8f94a3" stroke="#747a88" stroke-width="3"/><text x="240" y="482" class="wcs">WCS</text><path d="M349 461h30l-15 13z" fill="#a4a8b4" stroke="#c5c8d0" stroke-width="2"/>
  </g>
</svg>
<div class="vlabel">[&minus;][Custom View][Conceptual]</div>
<svg class="vctl" width="66" height="18" viewBox="1838 233 66 18"><path d="M1841 244.500h12" stroke="#fff" stroke-width="4"/><path d="M1868 237.500h9v9h-3M1866 240.500h8v7h-8z" fill="none" stroke="#fff" stroke-width="2.200"/><path d="M1891 237l9 10M1900 237l-9 10" stroke="#fff" stroke-width="3"/></svg>
<svg class="navbar" width="42" height="262" viewBox="447 586 126 786"><rect x="450" y="590" width="120" height="778" rx="9" fill="#5a6064" stroke="#14191f" stroke-width="4"/>
  <g fill="none" stroke="#41464e" stroke-width="5"><circle cx="548" cy="608" r="13"/><path d="M542 602l12 12M554 602l-12 12" stroke-width="3"/><path d="M510 656h40v40a41 40 0 1 1-40-40zM483 724l12-12M537 724l-12-12"/><circle cx="510" cy="694" r="22"/>
  <path d="M492 895l-24-36q-4-9 8-4l14 10-7-38q3-10 10 0l7 24 1-36q5-8 9 0l2 34 11-30q7-7 9 2l-5 34 11-17q8-6 10 2l-14 34-10 21z"/><path d="M467 916l56 56M523 916l-56 56M467 930v-13h14M510 917h13v13M523 958v13h-13M481 971h-14v-13"/><circle cx="524" cy="971" r="18"/><path d="M537 984l14 14" stroke-width="9"/>
  <path d="M508 1057l15 18h-7v62h-15v-62h-8z"/><path d="M497 1088q-25 5-30 16 12 16 40 13 38 0 43-14-4-10-28-14"/><path d="M480 1116l12-12v24z" fill="#41464e"/><path d="M467 1214h22v23h-22zM497 1214h22v23h-22zM527 1214h22v23h-22zM467 1247h59v50h-59z"/><circle cx="548" cy="1346" r="13"/><path d="M541 1342h14l-7 8z"/></g>
  <path fill="#3a3f47" d="M502 768h19l-9 10zM502 1028h19l-9 10zM502 1170h19l-9 10zM483 1256l26 15-26 16z"/></svg>
<div class="cmd"><div class="cmdl"><i class="grip"></i><svg class="x"><use href="#x"/></svg><svg class="wr" viewBox="0 0 20 20"><path d="M2 18L12 8" stroke="#b5b5b5" stroke-width="3.400" stroke-linecap="round"/><path d="M19 5a5 5 0 1 1-4.500-4.500" fill="none" stroke="#b5b5b5" stroke-width="3"/></svg></div>
 <div class="cmdf"><svg width="34" height="18" viewBox="0 0 34 18"><path d="M.5.500h19v15H.5z" fill="#b0b1b3" stroke="#555"/><path d="M0 0h20v4H0z" fill="#4c4c4c"/><path d="M2 6l4 3-4 3M7 12h5" fill="none" stroke="#555"/><path d="M22 6h10l-5 5z" fill="#4a4a4a"/></svg><span>Type a command</span><svg class="up" width="10" height="6" viewBox="0 0 10 6"><path d="M1 5l4-5 4 5z" fill="#444"/></svg></div></div>
</main>

<div class="bottom">
  <div class="mtabs"><b>Model</b><span>Layout1</span><span>Layout2</span><em><svg class="x"><use href="#plus"/></svg></em></div>
  <div class="status">
    <div class="g g1">MODEL</div>
    <div class="g g2"><i class="on1"><svg class="i" viewBox="0 0 20 20"><path class="sW" d="M5 0v20M10 0v20M15 0v20M0 5h20M0 10h20M0 15h20"/></svg></i><svg class="i" viewBox="0 0 20 20"><path d="M3 4h16M3 10h16M3 16h16" stroke="#d9d9d9" stroke-width="3" stroke-dasharray="3 3.300"/></svg><svg class="a"><use href="#dnL"/></svg></div>
    <div class="g g3"><svg class="i" viewBox="0 0 20 20"><path class="sg" d="M1 0v19h19M1 13h6v6"/></svg><svg class="i" viewBox="0 0 20 20"><circle class="sg" cx="8" cy="10" r="8"/><path class="sg" d="M8 10l8-8M8 10h12M14 3v7"/></svg><svg class="a"><use href="#dnL"/></svg><svg class="i" viewBox="0 0 20 20"><path stroke="#c05560" d="M2 2l16 15"/><path stroke="#5cc078" d="M10 1v18"/><path fill="#3b4453" stroke="#d9d9d9" d="M8 7h4v4H8z"/></svg><svg class="a"><use href="#dnL"/></svg></div>
    <div class="g g4"><svg class="i" viewBox="0 0 20 20"><path class="sg" d="M15 2L1 17h19"/><path class="fw" d="M6 8h4v4H6z"/></svg><i class="on1"><svg class="i" viewBox="0 0 20 20"><path class="sW" d="M6 2.500h13v17H2V7M.5.500h5v5h-5z"/></svg></i><svg class="a"><use href="#dnL"/></svg></div>
    <div class="g g5"><i class="on1"><svg class="i" viewBox="0 0 20 20"><use href="#compass" x="0" y="0" width="18" height="20"/><circle class="sW" cx="16" cy="4" r="3.300"/></svg></i><svg class="i" viewBox="0 0 20 20"><use href="#compass" width="18" height="20"/><path class="fg" d="M17 0l-4 6h3l-2 4 6-6h-3l2-4z"/></svg><svg class="i"><use href="#compass"/></svg><span>1:1</span><svg class="a"><use href="#dnL"/></svg></div>
    <div class="g g6"><svg class="i"><use href="#gear"/></svg><svg class="a"><use href="#dnL"/></svg></div>
    <div class="g g7"><svg class="i" viewBox="0 0 20 20"><path d="M10 0v20M0 10h20" stroke="#d9d9d9" stroke-width="2.600"/></svg></div>
    <div class="g g8"><svg class="i" viewBox="0 0 20 20"><path class="sg" d="M.5.500h8v8h-8zM8 12l4.500 7.500h-9z"/><circle class="sg" cx="15.500" cy="8.500" r="4"/></svg></div>
    <div class="g g9"><svg width="26" height="26" viewBox="0 0 26 26"><path d="M0 1h16q6 4 6 10 0 7-7 9L0 18z" fill="#3569ab"/><path stroke="#d8e6f5" stroke-width="1.300" d="M0 7h15M6 0v13"/><path fill="#f7b52f" d="M0 15h10v8H0z"/><path d="M11 18l5 5 8-9" fill="none" stroke="#57b657" stroke-width="4"/></svg></div>
    <div class="g g10"><svg class="i" viewBox="0 0 20 20"><path class="sg" d="M.5 3.500h19v13H.5zM4 13l3-3M16 7l-3 3"/><path class="fg" d="M3 10v4h4zM13 6h4v4z"/></svg><svg class="i" viewBox="0 0 20 20"><path d="M0 2h20M0 10h20M0 18h20" stroke="#e8e8e8" stroke-width="2"/></svg></div>
  </div>
</div>
</div>

<footer class="taskbar">
  <div class="apps">
  <div><svg width="20" height="20" viewBox="0 0 20 20"><path fill="#fff" d="M0 3l8-1.200V9.500H0zM9 1.600L20 0v9.500H9zM0 10.500h8v7.700L0 17zM9 10.500h11V20L9 18.400z"/></svg></div>
  <div><svg width="20" height="20" viewBox="0 0 20 20"><circle cx="12.500" cy="7.500" r="7" fill="none" stroke="#fff" stroke-width="1.400"/><path d="M7.500 12.500L.5 19.500" stroke="#fff" stroke-width="1.400"/></svg></div>
  <div><svg width="30" height="30" viewBox="0 0 30 30"><path fill="url(#edgeA)" d="M0 15Q1 7 9 7q9 0 10 6-6 1-4 8 4 6 13 3-5 6-13 6Q1 29 0 15z"/><path fill="url(#edgeB)" d="M0 14C1-1 19-4 27 6q5 6 2 12-3 4-10 2-1-1 0-3 1-9-9-10Q3 7 0 14z"/><path fill="#0f4c8c" d="M10 14q-3 9 6 12 6 2 12-2-6 7-15 5-9-5-3-15z"/></svg></div>
  <div><svg width="28" height="22" viewBox="0 0 28 22"><path d="M.5.500h27v21H.5z" fill="#000" stroke="#aaa"/><path fill="#9b9b9b" d="M1 1h26v2H1z"/><path fill="#555" d="M1 3h26Q8 8 1 16z"/><path d="M3 5h3M8 6h2M12 7h6" stroke="#ddd"/></svg></div>
  <div class="run"><svg width="28" height="24" viewBox="0 0 28 24"><path fill="#e3a117" d="M0 1h13v5H0z"/><path fill="#ffd563" d="M0 3h11l2-1h15v20H0z"/><path fill="#3b94dc" d="M5 12h18v11h-5v-5h-8v5H5z"/></svg></div>
  <div><svg width="30" height="30" viewBox="0 0 30 30"><path fill="#fff" d="M0 0h30v30H0z"/><circle cx="15" cy="15" r="14" fill="#e95420"/><circle cx="15.500" cy="15" r="6.500" fill="none" stroke="#fff" stroke-width="3"/><g fill="#fff" stroke="#e95420"><circle cx="6" cy="15" r="2.500"/><circle cx="20" cy="7" r="2.500"/><circle cx="20" cy="23" r="2.500"/></g></svg></div>
  <div class="run"><svg width="30" height="29" viewBox="0 0 30 29"><circle cx="15" cy="5" r="5" fill="#7b83eb"/><circle cx="25" cy="7" r="3.500" fill="#5059c9"/><path fill="#5059c9" d="M20 12h9v10q-3 4-8 2z"/><path fill="#7b83eb" d="M9 12h14v9q-1 7-8 6-5-1-6-6z"/><rect y="7" width="15" height="15" rx="1" fill="#4b53bc"/><path fill="#fff" d="M4 10.500h7v2H8.700v7H6.500v-7H4z"/><circle cx="24" cy="23.500" r="5.500" fill="#7fba00" stroke="#fff"/><path d="M21 23l2.500 2.500L27 22" fill="none" stroke="#fff" stroke-width="1.500"/></svg></div>
  <div class="run"><svg width="28" height="28" viewBox="0 0 28 28"><circle cx="14" cy="14" r="14" fill="#fcc934"/><path fill="#ea4335" d="M2 7A14 14 0 0 1 26.500 7.500H14L8 17z"/><path fill="#34a853" d="M1.800 7.200L8 18l6 3.500-3.500 6A14 14 0 0 1 1.800 7.200z"/><circle cx="14" cy="14" r="6.500" fill="#fff"/><circle cx="14" cy="14" r="5.200" fill="#1a73e8"/></svg></div>
  <div class="run"><svg width="28" height="28" viewBox="0 0 28 28"><rect width="27" height="27" rx="2" fill="#dfeafa" stroke="#9fb6d8"/><path d="M4 5l4 14 4-12 3 12L20 4" fill="none" stroke="#1d50b0" stroke-width="4"/><path fill="#fff" stroke="#a9bbd8" d="M17 17l6-2 4 10-8 2z"/></svg></div>
  <div class="run act"><svg width="30" height="30" viewBox="0 0 30 30"><path fill="#fbe6df" d="M0 0h30v30H0z"/><path d="M5 25L12 3h7l7 22h-6l-2-5-8 1-1 4zM13 15h4l-2-7z" fill="#b81f24"/><path fill="#e4463f" d="M5 25l6-6 7-1 2 7-3-5-6 1z"/></svg></div>
  <div class="run"><svg width="28" height="28" viewBox="0 0 28 28"><path fill="url(#photoG)" d="M0 0h28v28H0z"/><circle cx="19" cy="7" r="3" fill="#fff"/><path fill="#3b6bd0" d="M10 26l10-14 8 9v7z"/><path fill="#133a78" d="M0 18l9-8 16 18H0z"/></svg></div>
  </div>
  <div class="tray">
    <svg width="28" height="19" viewBox="0 0 28 19"><path fill="#2f7fd0" d="M14 4q6-6 12 1 2 4 0 8H16z"/><path fill="url(#cloudG)" d="M6 18.500Q0 18 0 13t5-5Q7 1 13 1t9 6q5 1 5 6t-5 5.500z"/></svg>
    <span class="wx">42°F&nbsp; Cloudy</span>
    <svg width="18" height="10" viewBox="0 0 18 10"><path class="tw" d="M1 9l8-8 8 8"/></svg>
    <svg width="20" height="14" viewBox="0 0 20 14"><path class="tw" d="M4.500 6V3M1 1v3q3 3 4 0V1M5 12.500h14v-9H7"/><path fill="#fff" d="M6 5h11v6H6zM19 6h1v4h-1z"/></svg>
    <svg width="16" height="16" viewBox="0 0 16 16"><path class="tw" d="M1 15Q0 3 15 1M4.500 15Q4 7 15 5.500M8.500 15Q9 10 15 9.500"/><path fill="#fff" d="M12 12h3v3h-3z"/></svg>
    <svg width="20" height="18" viewBox="0 0 20 18"><path class="tw" d="M1 6h3l4-4v14l-4-4H1zM10.500 6q2 3 0 6"/><path d="M13 4q4 5 0 10M16 1q6 8 0 16" fill="none" stroke="#667286" stroke-width="1.300"/></svg>
    <svg width="20" height="20" viewBox="0 0 20 20"><path class="tw" d="M6 17L15 2l3 2-9 15-4 1zM7 11q-7-1-6 4 2 4 6-1l4-4q5-4 7 0-2 4-5 1"/></svg>
    <span class="lang">ROU</span><span class="clock">3:04 PM<br>4/18/2022</span>
    <div class="note"><svg width="20" height="20" viewBox="0 0 20 20"><path fill="#fff" d="M0 0h20v16H8l-3 3v-3H0z"/><path d="M4 4.500h12M4 8h12M4 11.500h8" stroke="#1c2840" stroke-width="1.300"/></svg><b>1</b></div><i class="peek"></i>
  </div>
</footer>
</body>
</html>
```
FILE: styles.css
```css
* { box-sizing: border-box; }
body { margin: 0; width: 1920px; height: 1080px; overflow: hidden; background: linear-gradient(#e4ecee 0 43px, #fff 43px 88px, #dfe9e4 88px 500px, #e9eef0 500px); font: 14px/20px "Open Sans", "Noto Sans", sans-serif; letter-spacing: -.15px; color: #f3f4f5; }
svg { display: block; overflow: visible; flex: none; }
.defs { position: absolute; }
i, em { font-style: normal; display: block; }
span { white-space: nowrap; }

/* icon paint */
.fg { fill: #d9d9d9; } .fw { fill: #f1f1f1; } .fd { fill: #b4b4b4; }
.fb { fill: #8bc9fb; } .fB { fill: #b2deff; } .fe { fill: #68b0e8; }
.fy { fill: #ffd077; } .fr { fill: #ec5f5f; } .fn { fill: #45cc7c; } .fk { fill: #3b4453; }
.sg { fill: none; stroke: #b9bcc0; } .s2 { fill: none; stroke: #c2c4c7; stroke-width: 1.4; }
.sw { fill: none; stroke: #f0f0f0; } .sW { fill: none; stroke: #fff; stroke-width: 1.4; } .sk { fill: none; stroke: #3b4453; }
.sb { fill: none; stroke: #6db4ee; } .sr { fill: none; stroke: #dd6a70; } .sn { fill: none; stroke: #4dbb74; }
.ob { fill: #3b4453; stroke: #6db4ee; } .or { fill: #3b4453; stroke: #ee6f70; } .on { fill: #3b4453; stroke: #45c070; }
.i { width: 20px; height: 20px; }
.b { width: 40px; height: 40px; }
.a { width: 12px; height: 12px; }
.l { width: 8px; height: 8px; }
.x { width: 12px; height: 12px; }

.window { width: 1916px; height: 1030px; margin-left: 2px; border: 1px solid #0e97dc; background: #222933; display: flex; flex-direction: column; }

.title { height: 38px; flex: none; padding-left: 9px; display: grid; align-items: center; grid-template-rows: 34px;
  grid-template-columns: 23px 32px 30px 30px 30px 30px 30px 30px 30px 26px 19px 25px 17px 228px 20px 26px 208px 180px 225px 13px 228px 30px 27px 103px 22px 30px 26px 20px 12px 27px 44px 29px 31px 20px; }
.logo { width: 18px; height: 21px; }
.wsp { width: 223px; height: 26px; background: #3b4453; display: flex; align-items: center; padding: 0 1px 0 4px; gap: 3px; }
.wsp span { flex: 1; font-size: 14.500px; letter-spacing: -.25px; }
.share { color: #8bc9fb; font-size: 14px; padding-top: 1px; }
.name { font-size: 13.800px; letter-spacing: -.15px; }
.doc { font-size: 14.400px; }
.tri { width: 6px; height: 10px; }
.search { width: 223px; height: 26px; background: #454f61; color: #b6bac2; font: italic 13.500px/26px "Open Sans", sans-serif; padding-left: 3px; letter-spacing: -.25px; }
.usr { font-size: 14px; padding-top: 1px; }
.vsep { width: 1px; height: 22px; background: #424b59; }
.help { width: 20px; height: 20px; border-radius: 50%; background: #d9d9d9; color: #333; text-align: center; font-weight: 700; }
.min { width: 10px; height: 3px; background: #d9d9d9; margin-top: 7px; }
.max { width: 15px; height: 14px; border: 1px solid #d9d9d9; border-top-width: 3px; margin-top: -4px; }
.close { width: 14px; height: 14px; stroke: #e2e2e2; stroke-width: 1.8; margin-top: -2px; }

.tabs { height: 25px; flex: none; display: flex; align-items: center; margin-left: 7px; color: #b4b8bf; text-align: center; line-height: 25px; letter-spacing: -.12px; }
.tabs b { width: 68px; background: #3b4453; color: #fff; font-weight: 400; padding-right: 4px; }
.tabs span:nth-of-type(1) { width: 59px; } .tabs span:nth-of-type(2) { width: 73px; } .tabs span:nth-of-type(3) { width: 60px; }
.tabs span:nth-of-type(4) { width: 84px; } .tabs span:nth-of-type(5) { width: 92px; } .tabs span:nth-of-type(6) { width: 63px; }
.tabs span:nth-of-type(7) { width: 81px; } .tabs span:nth-of-type(8) { width: 62px; } .tabs span:nth-of-type(9) { width: 73px; }
.tabs span:nth-of-type(10) { width: 74px; } .tabs span:nth-of-type(11) { width: 72px; } .tabs span:nth-of-type(12) { width: 105px; }
.tabs span:nth-of-type(13) { width: 110px; } .tabs span:nth-of-type(14) { width: 122px; letter-spacing: 0; padding-right: 1px; }
.rbtn { width: 19px; height: 9px; background: #f4f4f4; margin: 2px 1px 0 25px; display: flex; justify-content: center; align-items: center; }
.rbtn::after { content: ""; border: 3px solid transparent; border-top: 0; border-bottom: 4px solid #555; }
.tabs .a { margin-top: 2px; }

.ribbon { width: 1906px; height: 124px; flex: none; margin-left: 4px; background: #3b4453; display: flex; }
.panel { display: flex; flex-direction: column; border-right: 1px solid #252c37; }
.panel:last-child { border: 0; }
.body { height: 100px; display: flex; }
.panel footer { height: 24px; display: flex; align-items: center; justify-content: center; font-size: 14.300px; letter-spacing: -.1px; }
.panel footer .a { margin: 1px 0 0 7px; }
.panel footer .l { margin: 0 0 0 13px; }
.big { display: flex; flex-direction: column; align-items: center; text-align: center; padding-top: 9px; }
.big span { margin-top: 6px; }
.big > .a { margin-top: -1px; }
.two span { margin-top: 4px; }
.grid { display: grid; grid-auto-rows: 20px; row-gap: 11px; padding-top: 10px; align-items: center; align-content: start; }
.sel { height: 28px; background: #4e5a6e; border: 1px solid #2a313d; display: flex; align-items: center; padding: 0 3px; }
.sel span { flex: 1; padding-left: 4px; }

.p-model { width: 234px; }
.p-model .big { width: 58px; } .p-model .big + .big { width: 72px; }
.rows { padding: 11px 0 0 8px; } .rows div { display: flex; gap: 6px; height: 31px; line-height: 21px; }
.p-mesh { width: 97px; } .p-mesh .big { width: 64px; } .p-mesh .grid { margin-left: 3px; } .p-mesh footer { justify-content: flex-end; padding-right: 5px; } .p-mesh footer .l { margin-left: 25px; }
.p-solid { width: 118px; } .p-solid .grid { margin-left: 7px; grid-template-columns: 35px 32px 27px 12px; }
.p-solid footer { letter-spacing: 0; padding-left: 2px; }
.p-draw { width: 117px; } .p-draw .grid { margin-left: 7px; grid-template-columns: 30px 35px 27px 12px; }
.p-modify { width: 181px; } .p-modify .grid { margin-left: 6px; grid-template-columns: 35px 30px 35px 30px 27px 12px; }
.p-section { width: 95px; } .p-section .big { width: 94px; } .p-section footer .l { margin-left: 10px; }
.p-coord { width: 181px; } .p-coord .grid { margin-left: 7px; grid-template-columns: 24px 25px 35px 30px 30px 20px; }
.p-coord footer { justify-content: flex-end; padding-right: 5px; } .p-coord footer .l { margin-left: 45px; }
.world { grid-column: 3 / 7; width: 125px; margin-left: -3px; padding-right: 2px; }
.p-view { width: 160px; padding-left: 2px; } .col { flex-direction: column; padding-top: 7px; gap: 3px; width: 154px; }
.p-view .sel { padding-left: 2px; } .uv span { padding-left: 2px; letter-spacing: 0; } .vbrow { display: flex; gap: 4px; align-items: center; padding: 2px 0 0 4px; }
.p-view footer { padding-right: 2px; }
.p-selection { width: 214px; } .cull { width: 53px; height: 89px; margin: 6px 0 0 2px; padding-top: 2px; background: #465b74; border: 1px solid #74baf0; }
.cull span { margin-top: 5px; }
.cull + .big { width: 86px; } .mg { width: 68px; } .mg span { margin-top: 5px; } .mga { margin: 70px 0 0 -8px; }
.p-layers { width: 341px; } .p-layers .big { width: 77px; } .lay { padding-top: 6px; } .lay .sel { width: 260px; padding-left: 3px; gap: 5px; padding-right: 0; }
.lay .sel .i { width: 20px; } .sw1 { width: 17px; height: 17px; background: #fff; } .lay .sel span { padding-left: 1px; letter-spacing: -.15px; }
.p-layers .big + .lay .grid { grid-template-columns: repeat(5, 30px); padding: 7px 0 0 4px; }
.p-groups { width: 85px; } .p-groups .big { width: 51px; } .gcol { padding: 10px 0 0 5px; display: flex; flex-direction: column; gap: 11px; }
.gact { width: 29px; height: 28px; margin: -4px 0 0 -5px; padding: 3px 4px; background: #465b74; border: 1px solid #74baf0; }
.p-base { width: 83px; } .p-base .big { width: 78px; padding-top: 13px; } .p-base .b { height: 30px; } .p-base .big span { margin-top: 11px; } .p-base .big > .a { margin-top: -2px; } .p-base footer { padding-right: 4px; } .p-base footer .l { margin-left: 9px; }

.files { height: 33px; flex: none; display: flex; align-items: flex-end; padding-left: 21px; }
.ft { height: 28px; background: #303745; color: #b4b8bf; line-height: 28px; display: flex; align-items: center; font-size: 14px; letter-spacing: -.2px; }
.f1 { width: 168px; padding-left: 22px; clip-path: path("M0 28C12 28 8 0 22 0H144C158 0 156 28 168 28Z"); }
.f2 { width: 162px; margin-left: -8px; padding-left: 16px; background: #3b4453; color: #fff; font-weight: 700; clip-path: path("M0 28C8 28 4 0 18 0H142C156 0 154 28 162 28Z"); }
.f2 span { width: 113px; }
.f3 { width: 196px; margin-left: -6px; padding-left: 14px; clip-path: path("M4 28C10 28 4 0 18 0H170C184 0 180 28 196 28Z"); }
.f3 span { width: 143px; letter-spacing: -.05px; }
.f4 { width: 26px; height: 18px; margin: 0 0 4px -2px; border-radius: 4px 14px 2px 12px; justify-content: center; }
.f4 .x { width: 11px; }

.canvas { position: relative; width: 1907px; height: 765px; flex: none; margin-left: 3px; background: #212830; box-shadow: 0 -5px 0 #3b4453; margin-top: 4px; }
.ln { fill: none; stroke: #fff; stroke-width: 1; vector-effect: non-scaling-stroke; }
.out { fill: none; stroke: #fff; stroke-width: 2; stroke-linejoin: round; vector-effect: non-scaling-stroke; }
.solids ellipse { vector-effect: non-scaling-stroke; }
.cubetx { font: 700 46px "Liberation Sans", sans-serif; fill: #3c4046; letter-spacing: 0; }
.cubedir { font: 700 58px "Liberation Sans", sans-serif; fill: #b4b6b9; }
.wcs { font: 35px "Liberation Sans", sans-serif; fill: #4b505c; letter-spacing: 1px; }
.vlabel { position: absolute; left: 4px; top: 6px; font-size: 14.400px; letter-spacing: 0; }
.vctl { position: absolute; left: 1832px; top: 8px; }
.navbar { position: absolute; left: 1863px; top: 260px; opacity: .95; }
.cmd { position: absolute; left: 381px; top: 732px; display: flex; height: 32px; width: 1144px; }
.cmdl { width: 70px; background: #282e3a; display: flex; align-items: center; }
.grip { width: 8px; height: 24px; margin-left: 4px; background: radial-gradient(circle, #b5b5b5 1.100px, transparent 1.300px) 0 0 / 4px 4px; }
.cmdl .x { margin-left: 6px; } .wr { width: 19px; height: 19px; margin-left: 15px; }
.cmdf { flex: 1; background: #bdbfc1; border-radius: 2px; display: flex; align-items: center; padding: 0 5px; color: #56595d; }
.cmdf span { flex: 1; font: italic 14.900px "DejaVu Sans Mono", monospace; letter-spacing: 0; padding-left: 6px; }

.bottom { flex: 1; display: flex; justify-content: space-between; align-items: flex-start; border-top: 1px solid #4a4f57; }
.mtabs { display: flex; margin-left: 17px; line-height: 21px; text-align: center; font-size: 14px; letter-spacing: -.2px; }
.mtabs > * { height: 22px; background: #303745; color: #b4b8bf; }
.mtabs b { width: 74px; background: #3b4453; color: #fff; border-radius: 0 0 10px 10px; }
.mtabs span { width: 80px; margin-left: 1px; padding-right: 2px; border-radius: 0 0 10px 10px; }
.mtabs em { width: 28px; margin-left: 5px; height: 20px; border-radius: 10px 2px 14px 3px; padding: 4px 8px; }
.status { display: flex; height: 30px; margin: 1px 5px 0 0; }
.g { background: #3b4453; display: flex; align-items: center; height: 30px; margin-left: 3px; }
.on1 { width: 28px; height: 28px; background: #5f8dbf; padding: 4px; }
.g1 { width: 59px; justify-content: center; font-size: 14.800px; letter-spacing: -.2px; }
.g2 { width: 80px; padding-left: 1px; } .g2 > .i { margin: 0 10px 0 5px; }
.g3 { width: 130px; padding-left: 5px; gap: 9px; } .g3 .i + .a { margin-left: 2px; } .g3 .a + .i { margin-left: -1px; }
.g4 { width: 80px; margin-left: 1px; padding-left: 5px; gap: 5px; }
.g5 { width: 132px; padding-left: 1px; } .g5 > .i { margin-left: 6px; margin-right: 4px; } .g5 > span { width: 18px; margin: 0 4px 0 7px; letter-spacing: -.4px; font-size: 14.400px; }
.g5 > .i + .i { width: 18px; }
.g6 { width: 50px; padding-left: 5px; gap: 9px; } .g7 { width: 30px; margin-left: 1px; padding-left: 5px; } .g8 { width: 30px; padding-left: 5px; } .g9 { width: 34px; padding-left: 4px; } .g10 { width: 60px; padding-left: 5px; gap: 10px; }

.taskbar { height: 50px; width: 1920px; display: flex; justify-content: space-between; background: linear-gradient(90deg, #233a40, #223a41 50%, #1f3041 72%, #1c2840 82%, #1b2742); }
.apps { display: flex; }
.apps div { width: 62px; display: flex; justify-content: center; align-items: center; border: solid transparent; border-width: 0 5px 0 6px; }
.apps div:nth-child(-n+2) { width: 60px; padding-right: 1px; }
.apps div:nth-child(3) { width: 64px; }
.apps .run { box-shadow: inset 0 -3px #76b9ed; background-clip: padding-box; }
.apps .act { background: #4c6065; width: 61px; margin: 0 1px 0 0; border: 0; }
.tray { display: flex; align-items: center; width: 508px; }
.wx { width: 134px; padding-left: 10px; font-size: 17.800px; letter-spacing: -.35px; padding-top: 1px; }
.tray > svg:nth-of-type(1) { margin-top: -1px; }
.tray > svg:nth-of-type(2) { margin-left: -3px; } .tray > svg:nth-of-type(3) { margin-left: 11px; } .tray > svg:nth-of-type(4) { margin-left: 13px; } .tray > svg:nth-of-type(5) { margin-left: 11px; } .tray > svg:nth-of-type(6) { margin-left: 15px; }
.tw { fill: none; stroke: #f4f4f4; stroke-width: 1.3; }
.lang { width: 32px; margin-left: 17px; letter-spacing: -.1px; }
.clock { width: 90px; margin-left: 3px; text-align: center; line-height: 23px; letter-spacing: 0; font-size: 14.200px; }
.note { position: relative; margin-left: 12px; }
.note b { position: absolute; left: 10px; top: 9px; width: 20px; height: 20px; border: 1px solid #9a9ea6; border-radius: 50%; background: #2b2f38; font-weight: 400; font-size: 13px; line-height: 18px; text-align: center; }
.peek { width: 1px; height: 50px; margin-left: 25px; background: #596273; }
```
